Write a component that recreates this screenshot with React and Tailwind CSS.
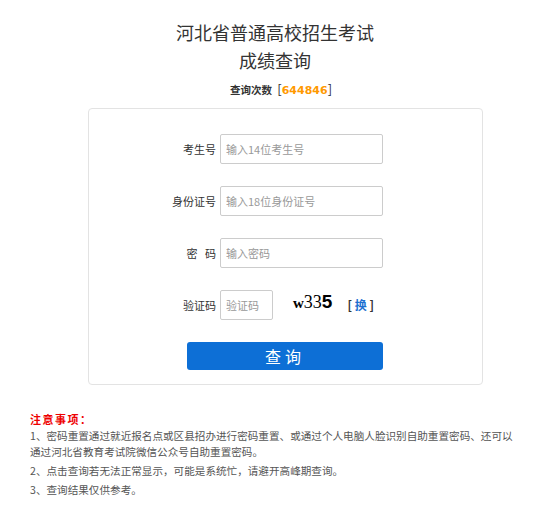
const fields = [
  { label: '考生号', placeholder: '输入14位考生号' },
  { label: '身份证号', placeholder: '输入18位身份证号' },
  { label: '密\u00a0\u00a0\u00a0码', placeholder: '输入密码' },
];

const notes = [
  '1、密码重置通过就近报名点或区县招办进行密码重置、或通过个人电脑人脸识别自助重置密码、还可以通过河北省教育考试院微信公众号自助重置密码。',
  '2、点击查询若无法正常显示，可能是系统忙，请避开高峰期查询。',
  '3、查询结果仅供参考。',
];

function FieldRow({ label, children }) {
  return (
    <div className="flex items-center h-[30px]">
      <label className="w-[131px] pr-[4px] text-right text-[11px] text-[#333]">{label}</label>
      {children}
    </div>
  );
}

export default function App() {
  return (
    <div
      className="w-[550px] min-h-[511px] bg-white text-[#333]"
      style={{ fontFamily: '"Microsoft YaHei", "Noto Sans CJK SC", sans-serif' }}
    >
      <div className="pt-[19px] text-center">
        <h1 className="text-[18px] leading-[26px] text-[#333] font-normal">河北省普通高校招生考试</h1>
        <h2 className="mt-[2px] text-[18px] leading-[26px] text-[#333] font-normal">成绩查询</h2>
        <p className="mt-[8px] pl-[12px] text-[10.5px] leading-[16px] font-bold text-[#333]">
          查询次数 <span className="font-normal text-[13px] ml-[3px]">[</span>
          <span className="text-[#f90] text-[11px]" style={{ fontFamily: '"DejaVu Sans", sans-serif' }}>644846</span>
          <span className="font-normal text-[13px]">]</span>
        </p>
      </div>

      <div className="mx-[88px] mt-[9px] w-[395px] h-[277px] border border-[#e3e3e3] rounded-[4px] pt-[25px]">
        <div className="flex flex-col gap-[22px]">
          {fields.map((f) => (
            <FieldRow key={f.placeholder} label={f.label}>
              <input
                placeholder={f.placeholder}
                className="w-[163px] h-[30px] border border-[#ccc] rounded-[2px] px-[5px] text-[11px] placeholder:text-[#999] outline-none"
              />
            </FieldRow>
          ))}
          <FieldRow label="验证码">
            <input
              placeholder="验证码"
              className="w-[53px] h-[30px] border border-[#ccc] rounded-[2px] px-[5px] text-[11px] placeholder:text-[#999] outline-none"
            />
            <span className="ml-[20px] -mt-[6px] flex items-baseline text-black">
              <span className="text-[15px] font-bold" style={{ fontFamily: '"Liberation Serif", serif' }}>w</span>
              <span className="text-[18px]" style={{ fontFamily: '"Liberation Serif", serif' }}>33</span>
              <span className="text-[19px] font-bold" style={{ fontFamily: '"Liberation Sans", sans-serif' }}>5</span>
            </span>
            <span className="ml-[15px] text-[12px] font-bold text-[#333]">
              [ <span className="text-[#1a6fd0]">换</span> ]
            </span>
          </FieldRow>
        </div>
        <div className="pl-[98px] mt-[22px]">
          <button className="w-[196px] h-[28px] rounded-[3px] bg-[#0d6fd6] text-white text-[16px] tracking-[4px] leading-[28px]">
            查询
          </button>
        </div>
      </div>

      <div className="px-[30px] pt-[26px] text-[10.6px] leading-[16px] text-[#555]">
        <p className="font-bold text-[#e00] text-[11px] tracking-[1.5px]">注意事项：</p>
        {notes.map((n, i) => (
          <p key={i} className={i === 0 ? 'mt-[1px] pr-[4px]' : 'mt-[3px]'}>{n}</p>
        ))}
      </div>
    </div>
  );
}
